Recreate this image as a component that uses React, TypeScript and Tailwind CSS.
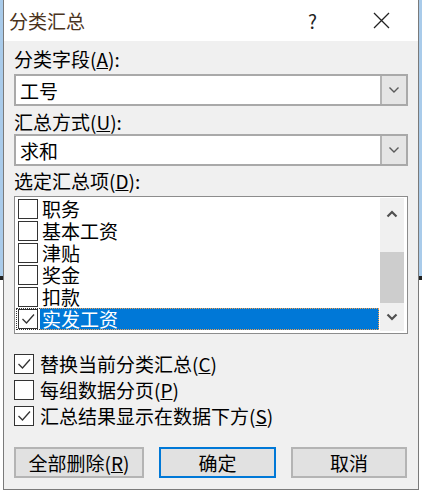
import React from "react";

const font = { fontFamily: '"Noto Sans CJK SC", "Noto Sans", sans-serif' };

const Chevron = ({ up = false, thin = false }: { up?: boolean; thin?: boolean }) => (
    <svg width="12" height="8" viewBox="0 0 12 8" className="block">
        <path
            d={up ? "M1.5 6.5 L6 2 L10.5 6.5" : "M1.5 1.5 L6 6 L10.5 1.5"}
            fill="none"
            stroke={thin ? "#5a5a5a" : "#505050"}
            strokeWidth={thin ? 1.4 : 2.2}
        />
    </svg>
);

const CheckBox = ({ checked = false }: { checked?: boolean }) => (
    <div className="w-[20px] h-[20px] border border-[#333333] bg-white flex items-center justify-center shrink-0">
        {checked && (
            <svg width="16" height="16" viewBox="0 0 16 16">
                <path d="M2.5 8 L6.5 12 L14 3.5" fill="none" stroke="#333333" strokeWidth="1.3" />
            </svg>
        )}
    </div>
);

const Combo = ({ value }: { value: string }) => (
    <div className="h-[32px] border-2 border-[#a9a9a9] bg-white flex">
        <div className="flex-1 pl-[4px] flex items-center leading-none text-black">{value}</div>
        <div className="w-[26px] bg-[#e5e5e5] border-l-2 border-[#b4b4b4] flex items-center justify-center">
            <Chevron thin />
        </div>
    </div>
);

const items = [
    { name: "职务", checked: false },
    { name: "基本工资", checked: false },
    { name: "津贴", checked: false },
    { name: "奖金", checked: false },
    { name: "扣款", checked: false },
    { name: "实发工资", checked: true, selected: true },
];

const options = [
    { label: "替换当前分类汇总", key: "C", checked: true },
    { label: "每组数据分页", key: "P", checked: false },
    { label: "汇总结果显示在数据下方", key: "S", checked: true },
];

const Strip = () => (
    <div className="w-[3px] h-full flex flex-col">
        <div className="h-[276px] bg-[#a9cbea]" />
        <div className="h-[4px] bg-[#222222]" />
        <div className="flex-1 bg-white" />
    </div>
);

export default function App() {
    return (
        <div className="w-[422px] h-[494px] bg-white flex overflow-hidden" style={font}>
            <Strip />
            <div className="w-[416px] h-[490px] border-x border-b border-[#7a7a7a] flex flex-col bg-[#f0f0f0]">
                {/* Title bar */}
                <div className="h-[41px] bg-white flex items-center pl-[5px] shrink-0">
                    <span className="text-[19px] text-[#4a3320] leading-none">分类汇总</span>
                    <span className="ml-auto text-[19px] text-[#222222] leading-none mr-[56px]">?</span>
                    <svg width="17" height="17" viewBox="0 0 17 17" className="mr-[28px]">
                        <path d="M1 1 L16 16 M16 1 L1 16" stroke="#222222" strokeWidth="1.3" />
                    </svg>
                </div>

                {/* Body */}
                <div className="flex-1 px-[10px] pt-[7px] text-[19px] text-black">
                    <div className="h-[21px] leading-[21px]">
                        分类字段(<span className="underline">A</span>):
                    </div>
                    <div className="mt-[5px]">
                        <Combo value="工号" />
                    </div>
                    <div className="mt-[5px] h-[21px] leading-[21px]">
                        汇总方式(<span className="underline">U</span>):
                    </div>
                    <div className="mt-[2px]">
                        <Combo value="求和" />
                    </div>
                    <div className="mt-[4px] h-[21px] leading-[21px]">
                        选定汇总项(<span className="underline">D</span>):
                    </div>

                    {/* List box */}
                    <div className="mt-[5px] h-[138px] border border-[#8c8c8c] bg-white flex pt-[1px] pb-[2px] pl-[1px] pr-[3px]">
                        <div className="flex-1 flex flex-col pr-[1px]">
                            {items.map((it) => (
                                <div key={it.name} className="h-[22px] flex leading-[20px]">
                                    <div
                                        className={`flex items-center pl-[1px] pr-[2px] border-l border-y border-dotted ${it.selected ? "border-[#333333]" : "border-transparent"}`}
                                    >
                                        <CheckBox checked={it.checked} />
                                    </div>
                                    <div
                                        className={`flex-1 flex items-center pl-[2px] border-r border-y border-dotted ${it.selected ? "bg-[#0078d7] text-white border-[#f0a050]" : "border-transparent"}`}
                                    >
                                        {it.name}
                                    </div>
                                </div>
                            ))}
                        </div>
                        <div className="w-[24px] bg-[#f0f0f0] flex flex-col">
                            <div className="h-[32px] flex items-center justify-center">
                                <Chevron up />
                            </div>
                            <div className="h-[22px]" />
                            <div className="h-[51px] bg-[#cdcdcd]" />
                            <div className="flex-1 flex items-center justify-center">
                                <Chevron />
                            </div>
                        </div>
                    </div>

                    {/* Options */}
                    <div className="mt-[17px] flex flex-col">
                        {options.map((o) => (
                            <div key={o.key} className="h-[26px] flex items-center gap-[6px] leading-[22px]">
                                <CheckBox checked={o.checked} />
                                <span>
                                    {o.label}(<span className="underline">{o.key}</span>)
                                </span>
                            </div>
                        ))}
                    </div>

                    {/* Buttons */}
                    <div className="mt-[18px] flex gap-[15px] leading-none">
                        <button className="w-[130px] h-[31px] bg-[#e1e1e1] border-2 border-[#b4b4b4] flex items-center justify-center">
                            全部删除(<span className="underline">R</span>)
                        </button>
                        <button className="w-[117px] h-[31px] bg-[#e1e1e1] border-2 border-[#0078d7] flex items-center justify-center">
                            确定
                        </button>
                        <button className="w-[116px] h-[31px] bg-[#e1e1e1] border-2 border-[#b4b4b4] flex items-center justify-center">
                            取消
                        </button>
                    </div>
                </div>
            </div>
            <Strip />
        </div>
    );
}
